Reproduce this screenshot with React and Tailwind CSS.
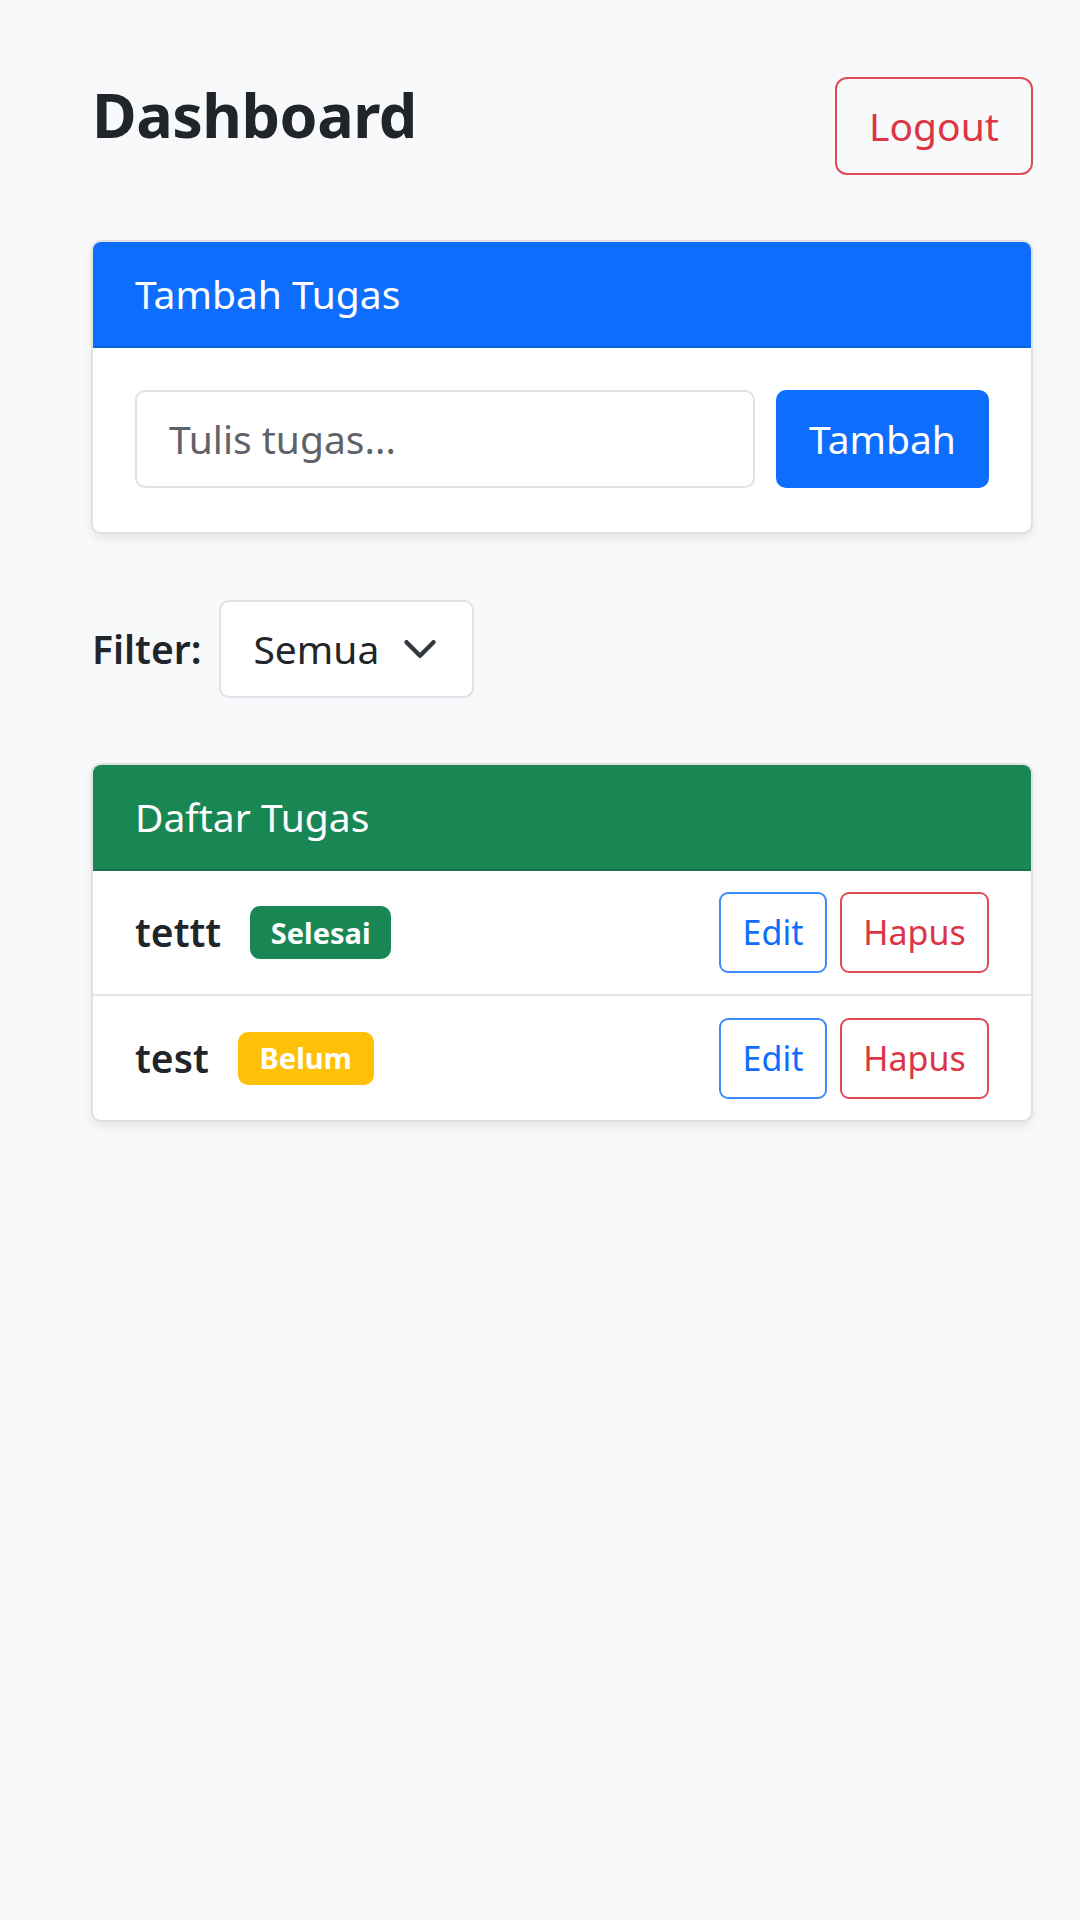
export default function App() {
  const tasks = [
    { name: "tettt", status: "Selesai", badge: "bg-[#198754]", w: "w-[141px]" },
    { name: "test", status: "Belum", badge: "bg-[#ffc107]", w: "w-[136px]" },
  ];
  return (
    <div className="min-h-[1920px] w-[1080px] bg-[#f8f9fa] font-['Noto_Sans','DejaVu_Sans',sans-serif] text-[#212529]">
      <div className="ml-[91px] w-[942px] pt-[77px] flex flex-col">
        {/* Header */}
        <div className="flex items-start justify-between">
          <h2 className="ml-[1px] mt-[2px] text-[61px] leading-[72px] font-bold tracking-[-0.5px]">Dashboard</h2>
          <button className="h-[98px] w-[198px] rounded-[12px] border-2 border-[#e04b59] text-[39px] text-[#dc3545] flex items-center justify-center">
            Logout
          </button>
        </div>

        {/* Tambah Tugas card */}
        <div className="mt-[65px] rounded-[10px] border-2 border-black/[0.12] bg-white overflow-hidden shadow-[0_5px_10px_rgba(0,0,0,0.075)]">
          <div className="h-[106px] bg-[#0d6efd] border-b-2 border-black/[0.12] px-[42px] flex items-center text-white text-[39px]">
            Tambah Tugas
          </div>
          <div className="px-[42px] pt-[42px] pb-[44px] flex gap-[21px]">
            <div className="h-[98px] flex-1 rounded-[10px] border-2 border-[#dee2e6] bg-white px-[32px] flex items-center text-[39px] text-[#5f6368]">
              Tulis tugas...
            </div>
            <button className="h-[98px] w-[213px] rounded-[10px] bg-[#0d6efd] text-white text-[39px] flex items-center justify-center">
              Tambah
            </button>
          </div>
        </div>

        {/* Filter */}
        <div className="mt-[66px] flex items-center gap-[18px]">
          <span className="ml-[1px] text-[39px] font-semibold">Filter:</span>
          <div className="h-[98px] w-[255px] rounded-[10px] border-2 border-[#dee2e6] bg-white pl-[32px] pr-[34px] flex items-center justify-between text-[39px]">
            <span>Semua</span>
            <svg width="36" height="36" viewBox="0 0 16 16" fill="none">
              <path d="m2 5 6 6 6-6" stroke="#343a40" strokeWidth="2" strokeLinecap="round" strokeLinejoin="round" />
            </svg>
          </div>
        </div>

        {/* Daftar Tugas card */}
        <div className="mt-[65px] rounded-[10px] border-2 border-black/[0.12] bg-white overflow-hidden shadow-[0_5px_10px_rgba(0,0,0,0.075)]">
          <div className="h-[106px] bg-[#198754] border-b-2 border-black/[0.12] px-[42px] flex items-center text-white text-[39px]">
            Daftar Tugas
          </div>
          {tasks.map((t, i) => (
            <div
              key={t.name}
              className={`${i === 0 ? "h-[125px] border-b-2 border-[#e3e6e9]" : "h-[124px]"} pl-[42px] pr-[42px] flex items-center justify-between`}
            >
              <div className="flex items-center">
                <span className="text-[39px] font-semibold">{t.name}</span>
                <span className={`ml-[29px] h-[53px] ${t.w} ${t.badge} rounded-[10px] flex items-center justify-center text-white text-[29px] font-bold`}>
                  {t.status}
                </span>
              </div>
              <div className="flex items-center gap-[13px]">
                <button className="h-[81px] w-[108px] rounded-[9px] border-2 border-[#3d8bfd] text-[#0d6efd] text-[34px] flex items-center justify-center">
                  Edit
                </button>
                <button className="h-[81px] w-[149px] rounded-[9px] border-2 border-[#e04b59] text-[#dc3545] text-[34px] flex items-center justify-center">
                  Hapus
                </button>
              </div>
            </div>
          ))}
        </div>
      </div>
    </div>
  );
}
